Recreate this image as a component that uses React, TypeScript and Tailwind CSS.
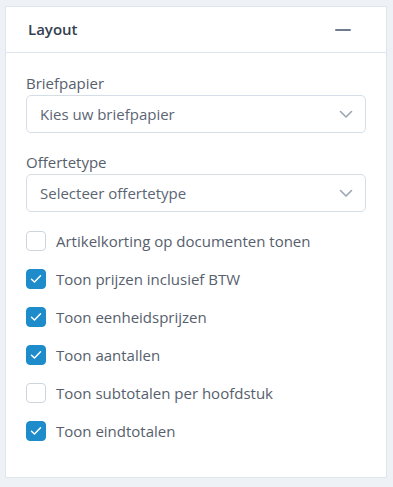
import React, { useState } from 'react';

const font = { fontFamily: '"Open Sans", Roboto, sans-serif' };

const SelectBox: React.FC<{ placeholder: string }> = ({ placeholder }) => (
  <div className="flex h-[38px] items-center justify-between rounded-[5px] border border-[#d5dde6] bg-white pl-[13px] pr-[12px]">
    <span className="text-[15px] text-[#5b6574]">{placeholder}</span>
    <svg width="14" height="9" viewBox="0 0 14 9" fill="none">
      <path d="M1.5 1.5 7 7l5.5-5.5" stroke="#9aa5b3" strokeWidth="1.6" strokeLinecap="round" strokeLinejoin="round" />
    </svg>
  </div>
);

const CheckRow: React.FC<{ label: string; checked: boolean; onToggle: () => void }> = ({ label, checked, onToggle }) => (
  <label className="flex h-[38px] cursor-pointer items-center gap-[10px]" onClick={onToggle}>
    <span
      className={`flex h-[20px] w-[20px] items-center justify-center rounded-[4px] border ${
        checked ? 'border-[#1e8bcb] bg-[#1e8bcb]' : 'border-[#cdd5df] bg-white'
      }`}
    >
      {checked && (
        <svg width="12" height="10" viewBox="0 0 12 10" fill="none">
          <path d="M1.5 5.2 4.5 8 10.5 1.8" stroke="white" strokeWidth="1.5" strokeLinecap="round" strokeLinejoin="round" />
        </svg>
      )}
    </span>
    <span className="text-[15px] text-[#56606d]">{label}</span>
  </label>
);

export default function App() {
  const [opts, setOpts] = useState([
    { label: 'Artikelkorting op documenten tonen', checked: false },
    { label: 'Toon prijzen inclusief BTW', checked: true },
    { label: 'Toon eenheidsprijzen', checked: true },
    { label: 'Toon aantallen', checked: true },
    { label: 'Toon subtotalen per hoofdstuk', checked: false },
    { label: 'Toon eindtotalen', checked: true },
  ]);

  const toggle = (i: number) =>
    setOpts((prev) => prev.map((o, j) => (j === i ? { ...o, checked: !o.checked } : o)));

  return (
    <div className="h-[487px] w-[393px] bg-[#eef2f6] pl-[5px] pt-[6px]" style={font}>
      <div className="w-[382px] border border-[#dfe5ec] bg-white">
        {/* Header */}
        <div className="flex h-[46px] items-center justify-between border-b border-[#dfe5ec] pl-[22px] pr-[35px]">
          <span className="text-[15px] font-semibold text-[#34404f]">Layout</span>
          <span className="block h-[2px] w-[16px] rounded bg-[#6f7c8c]" />
        </div>

        {/* Body */}
        <div className="px-[20px] pb-[27px] pt-[20px]">
          <div className="mb-[2px] text-[15px] leading-[20px] text-[#56606d]">Briefpapier</div>
          <SelectBox placeholder="Kies uw briefpapier" />

          <div className="mb-[2px] mt-[19px] text-[15px] leading-[20px] text-[#56606d]">Offertetype</div>
          <SelectBox placeholder="Selecteer offertetype" />

          <div className="mt-[10px] flex flex-col">
            {opts.map((o, i) => (
              <CheckRow key={o.label} label={o.label} checked={o.checked} onToggle={() => toggle(i)} />
            ))}
          </div>
        </div>
      </div>
    </div>
  );
}
